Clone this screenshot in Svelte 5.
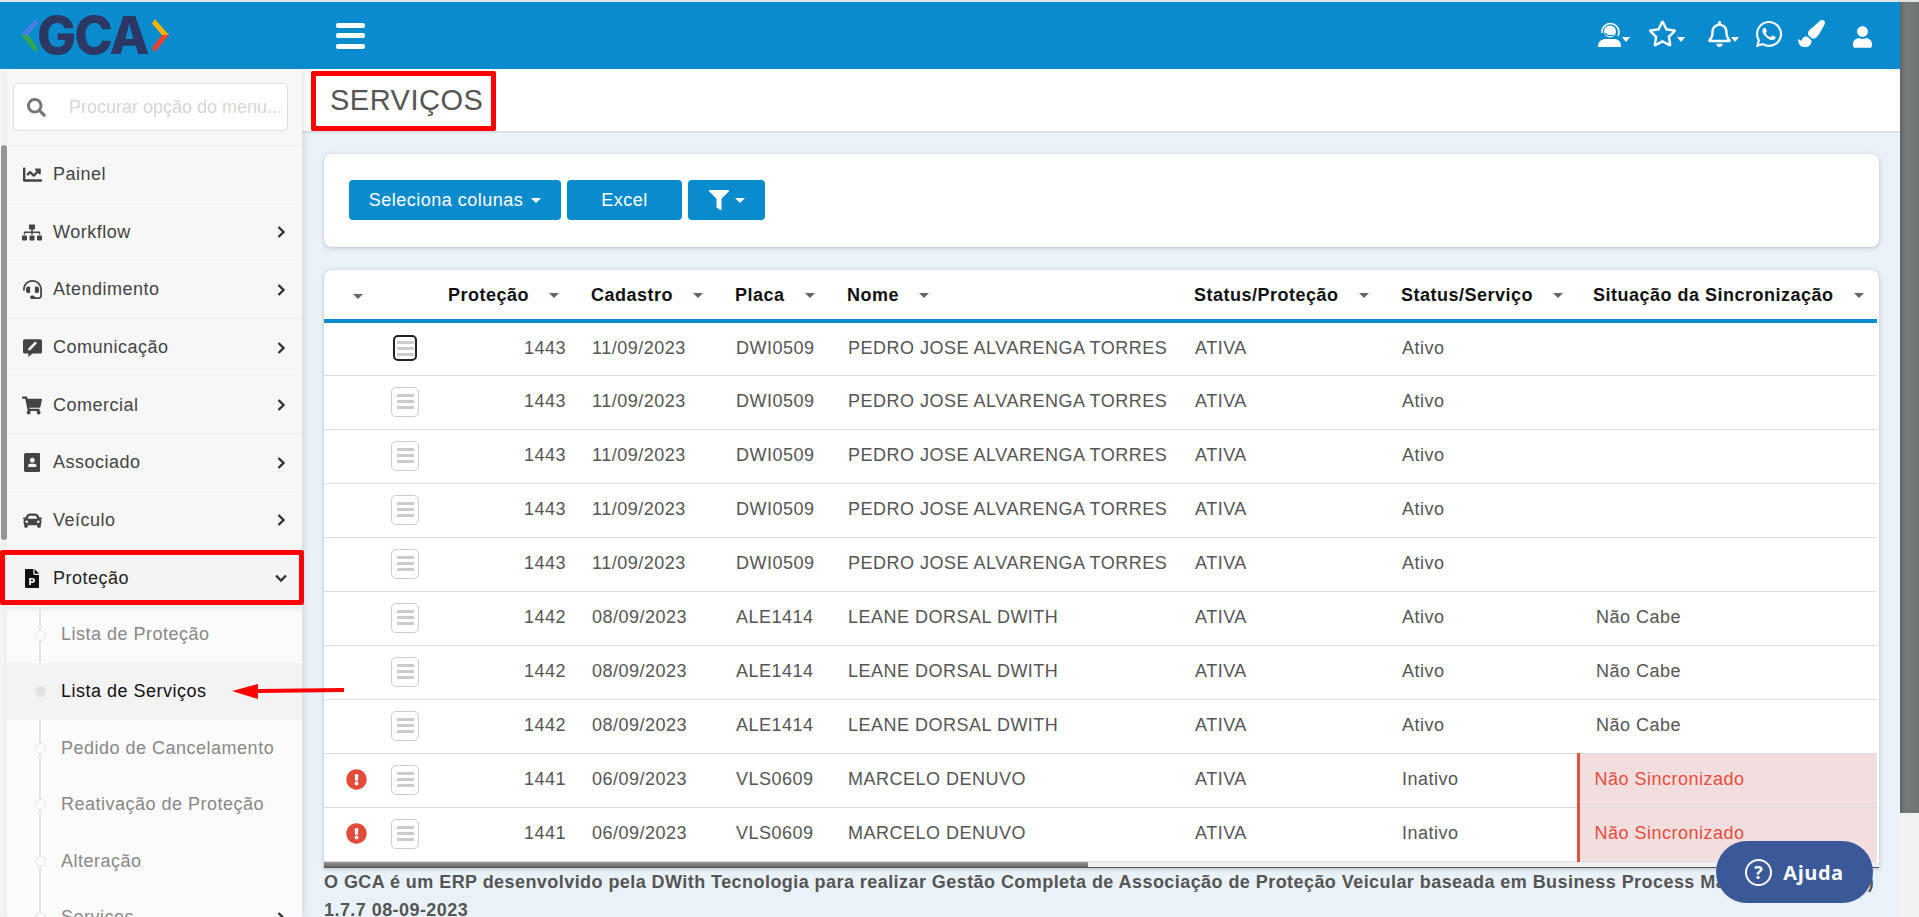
<script>
  const icons = {
    chart: { vb: "0 0 512 512", d: "M496 384H64V80c0-8.84-7.16-16-16-16H16C7.16 64 0 71.16 0 80v336c0 17.67 14.33 32 32 32h464c8.84 0 16-7.16 16-16v-32c0-8.84-7.16-16-16-16zM464 96H345.94c-21.38 0-32.09 25.85-16.97 40.97l32.4 32.4L288 242.75l-73.37-73.37c-12.5-12.5-32.76-12.5-45.25 0l-68.69 68.69c-6.25 6.25-6.25 16.38 0 22.63l22.62 22.62c6.25 6.25 16.38 6.25 22.63 0L192 237.25l73.37 73.37c12.5 12.5 32.76 12.5 45.25 0l96-96 32.4 32.4c15.12 15.12 40.97 4.41 40.97-16.97V112c.01-8.84-7.15-16-15.99-16z" },
    sitemap: { vb: "0 0 640 512", d: "M128 352H32c-17.67 0-32 14.33-32 32v96c0 17.67 14.33 32 32 32h96c17.67 0 32-14.33 32-32v-96c0-17.67-14.33-32-32-32zm-24-80h192v48h48v-48h192v48h48v-57.59c0-21.17-17.23-38.41-38.41-38.41H344v-64h40c17.67 0 32-14.33 32-32V32c0-17.67-14.33-32-32-32H256c-17.67 0-32 14.33-32 32v96c0 17.67 14.33 32 32 32h40v64H94.41C73.23 224 56 241.23 56 262.41V320h48v-48zm264 80h-96c-17.67 0-32 14.33-32 32v96c0 17.67 14.33 32 32 32h96c17.67 0 32-14.33 32-32v-96c0-17.67-14.33-32-32-32zm240 0h-96c-17.67 0-32 14.33-32 32v96c0 17.67 14.33 32 32 32h96c17.67 0 32-14.33 32-32v-96c0-17.67-14.33-32-32-32z" },
    headset: { vb: "0 0 512 512", d: "M192 208c0-17.67-14.33-32-32-32h-16c-35.35 0-64 28.65-64 64v48c0 35.35 28.65 64 64 64h16c17.67 0 32-14.33 32-32V208zm176 144c35.35 0 64-28.65 64-64v-48c0-35.35-28.65-64-64-64h-16c-17.67 0-32 14.33-32 32v112c0 17.67 14.33 32 32 32h16zM256 0C113.18 0 4.58 118.83 0 256v16c0 8.84 7.16 16 16 16h16c8.84 0 16-7.16 16-16v-16c0-114.69 93.31-208 208-208s208 93.31 208 208h-.12c.08 2.43.12 165.72.12 165.72 0 23.35-18.93 42.28-42.28 42.28H320c0-26.51-21.49-48-48-48h-32c-26.51 0-48 21.49-48 48s21.49 48 48 48h181.72c49.86 0 90.28-40.42 90.28-90.28V256C507.42 118.83 398.82 0 256 0z" },
    comment: { vb: "0 0 512 512", d: "M48 32h416c26.5 0 48 21.5 48 48v288c0 26.5-21.500 48-48 48H256l-112 96v-96H48c-26.5 0-48-21.500-48-48V80c0-26.500 21.500-48 48-48zm280 64l-176 176-16 64 64-16 176-176z" },
    cart: { vb: "0 0 576 512", d: "M528.12 301.319l47.273-208C578.806 78.301 567.391 64 551.99 64H159.208l-9.166-44.81C147.758 8.021 137.93 0 126.529 0H24C10.745 0 0 10.745 0 24v16c0 13.255 10.745 24 24 24h69.883l70.248 343.435C147.325 417.1 136 435.222 136 456c0 30.928 25.072 56 56 56s56-25.072 56-56c0-15.674-6.447-29.835-16.824-40h209.647C430.447 426.165 424 440.326 424 456c0 30.928 25.072 56 56 56s56-25.072 56-56c0-22.172-12.888-41.332-31.579-50.405l5.517-24.276c3.413-15.018-8.002-29.319-23.403-29.319H218.117l-6.545-32h293.145c11.206 0 20.92-7.754 23.403-18.681z" },
    contact: { vb: "0 0 448 512", d: "M48 0h352c26.500 0 48 21.500 48 48v416c0 26.500-21.500 48-48 48H48c-26.500 0-48-21.500-48-48V48C0 21.500 21.500 0 48 0zm176 128c-35.300 0-64 28.700-64 64s28.700 64 64 64 64-28.700 64-64-28.700-64-64-64zm-48 160c-35.300 0-64 21.500-64 48v24c0 8.800 7.200 16 16 16h192c8.800 0 16-7.200 16-16v-24c0-26.500-28.700-48-64-48z" },
    car: { vb: "0 0 512 512", d: "M499.99 176h-59.87l-16.64-41.6C406.38 91.63 365.57 64 319.5 64h-127c-46.06 0-86.88 27.63-103.99 70.4L71.87 176H12.01C4.2 176-1.53 183.34.37 190.91l6 24C7.7 220.25 12.5 224 18.01 224h20.07C24.65 235.73 16 252.78 16 272v48c0 16.12 6.16 30.67 16 41.93V416c0 17.67 14.33 32 32 32h32c17.67 0 32-14.33 32-32v-32h256v32c0 17.67 14.33 32 32 32h32c17.67 0 32-14.33 32-32v-54.07c9.84-11.25 16-25.8 16-41.93v-48c0-19.22-8.65-36.27-22.07-48H494c5.51 0 10.31-3.75 11.64-9.09l6-24c1.89-7.57-3.84-14.91-11.65-14.91zm-352.06-17.83c7.29-18.22 24.94-30.17 44.57-30.17h127c19.63 0 37.28 11.95 44.57 30.17L384 208H128l19.93-49.83zM96 319.8c-19.2 0-32-12.76-32-31.9S76.8 256 96 256s48 28.71 48 47.85-28.8 15.95-48 15.95zm320 0c-19.2 0-48 3.19-48-15.95S396.8 256 416 256s32 12.76 32 31.9-12.8 31.9-32 31.9z" },
    filep: { vb: "0 0 384 512", d: "M32 0h192v128c0 17.700 14.300 32 32 32h128v320c0 17.700-14.300 32-32 32H32c-17.700 0-32-14.300-32-32V32C0 14.300 14.300 0 32 0zm224 0l128 128H256zM112 240v192h48v-56h40c39.800 0 72-30 72-68s-32.200-68-72-68zm48 44h36c13 0 24 10.500 24 24s-11 24-24 24h-36z" }
  };

  const menu = [
    { label: "Painel", icon: "chart" },
    { label: "Workflow", icon: "sitemap", more: true },
    { label: "Atendimento", icon: "headset", more: true },
    { label: "Comunicação", icon: "comment", more: true },
    { label: "Comercial", icon: "cart", more: true },
    { label: "Associado", icon: "contact", more: true },
    { label: "Veículo", icon: "car", more: true }
  ];

  const submenu = [
    { label: "Lista de Proteção" },
    { label: "Lista de Serviços", active: true },
    { label: "Pedido de Cancelamento" },
    { label: "Reativação de Proteção" },
    { label: "Alteração" },
    { label: "Serviços", more: true }
  ];

  const columns = ["Proteção", "Cadastro", "Placa", "Nome", "Status/Proteção", "Status/Serviço", "Situação da Sincronização"];

  const pedro = { id: 1443, date: "11/09/2023", plate: "DWI0509", name: "PEDRO JOSE ALVARENGA TORRES", status: "Ativo", sync: "" };
  const leane = { id: 1442, date: "08/09/2023", plate: "ALE1414", name: "LEANE DORSAL DWITH", status: "Ativo", sync: "Não Cabe" };
  const marcelo = { id: 1441, date: "06/09/2023", plate: "VLS0609", name: "MARCELO DENUVO", status: "Inativo", sync: "Não Sincronizado", alert: true };
  const rows = [pedro, pedro, pedro, pedro, pedro, leane, leane, leane, marcelo, marcelo];
</script>

{#snippet chevron(down)}
  <svg class="chev" class:down viewBox="0 0 10 14"><path d="M2.500 2l5 5-5 5" /></svg>
{/snippet}

<div class="page">
  <div class="window">
    <header class="topbar">
      <div class="brand">
        <svg class="chevrons" viewBox="0 0 20 38">
          <path d="M17 0L1 18h8L20 5z" fill="#4a7fe4" />
          <path d="M1 18l16 19 3-5-11-14z" fill="#2fa84f" />
        </svg>
        <span class="logo">GCA</span>
        <svg class="chevrons" viewBox="0 0 20 38">
          <path d="M3 0l16 18h-8L0 5z" fill="#f4b400" />
          <path d="M19 18L3 37l-3-5 11-14z" fill="#e8452c" />
        </svg>
      </div>
      <button class="burger" aria-label="menu"><i></i><i></i><i></i></button>
      <nav class="tools">
        <svg class="agent" viewBox="0 0 24 26" fill="none" stroke="#fff">
          <path d="M4 12a8.500 8.500 0 1 1 16 3" stroke-width="1.500" />
          <circle cx="12" cy="10.500" r="6" fill="#fff" stroke="none" />
          <path d="M7 12c2 3 6 3 9 2" stroke="#0a8bcd" stroke-width="1.300" />
          <path d="M0 26c0-6 4-8 8-8h8c4 0 7 2 7 8z" fill="#fff" stroke="none" />
        </svg>
        <span class="tcaret"></span>
        <svg class="star" viewBox="0 0 576 512"><path fill="#fff" d="M528.1 171.5L382 150.2 316.7 17.8c-11.700-23.600-45.600-23.900-57.400 0L194 150.200 47.900 171.500c-26.200 3.800-36.700 36.100-17.700 54.600l105.700 103-25 145.500c-4.500 26.300 23.200 46 46.400 33.700L288 439.600l130.700 68.700c23.200 12.200 50.900-7.400 46.400-33.700l-25-145.500 105.700-103c19-18.500 8.500-50.800-17.700-54.600zM388.600 312.300l23.700 138.400L288 385.400l-124.300 65.300 23.700-138.400-100.600-98 139-20.200 62.200-126 62.200 126 139 20.200-100.600 98z" /></svg>
        <span class="tcaret"></span>
        <svg class="bell" viewBox="0 0 448 512"><path fill="#fff" d="M439.390 362.290c-19.320-20.760-55.470-51.990-55.470-154.290 0-77.700-54.480-139.900-127.940-155.160V32c0-17.670-14.320-32-31.980-32s-31.980 14.330-31.980 32v20.840C118.560 68.100 64.080 130.300 64.080 208c0 102.300-36.150 133.530-55.470 154.290-6 6.450-8.660 14.160-8.610 21.710.110 16.400 12.980 32 32.100 32h383.800c19.120 0 32-15.600 32.100-32 .050-7.550-2.610-15.270-8.610-21.710zM67.530 368c21.220-27.970 44.420-74.330 44.530-159.420 0-.200-.060-.380-.060-.580 0-61.860 50.140-112 112-112s112 50.140 112 112c0 .200-.060.380-.060.580.110 85.100 23.310 131.460 44.530 159.420H67.530zM224 512c35.320 0 63.970-28.650 63.970-64H160.030c0 35.350 28.650 64 63.970 64z" /></svg>
        <span class="tcaret"></span>
        <svg class="whats" viewBox="0 0 448 512"><path fill="#fff" d="M380.900 97.100C339 55.100 283.200 32 223.900 32c-122.400 0-222 99.600-222 222 0 39.100 10.200 77.300 29.600 111L0 480l117.700-30.900c32.400 17.700 68.900 27 106.100 27h.100c122.300 0 224.100-99.600 224.100-222 0-59.300-25.200-115-67.100-157zm-157 341.600c-33.200 0-65.700-8.900-94-25.700l-6.700-4-69.800 18.300L72 359.200l-4.400-7c-18.500-29.400-28.200-63.300-28.200-98.200 0-101.700 82.800-184.500 184.600-184.500 49.300 0 95.600 19.200 130.400 54.100 34.800 34.900 56.200 81.200 56.100 130.500 0 101.800-84.900 184.600-186.600 184.600zm101.200-138.200c-5.500-2.800-32.800-16.200-37.900-18-5.100-1.900-8.800-2.800-12.500 2.800-3.700 5.600-14.300 18-17.600 21.800-3.200 3.700-6.500 4.200-12 1.400-32.600-16.300-54-29.100-75.500-66-5.700-9.800 5.700-9.100 16.300-30.300 1.800-3.700.9-6.900-.5-9.700-1.400-2.800-12.500-30.100-17.100-41.200-4.500-10.800-9.100-9.300-12.500-9.500-3.200-.2-6.900-.2-10.600-.2-3.700 0-9.700 1.400-14.800 6.900-5.100 5.600-19.400 19-19.400 46.300 0 27.300 19.900 53.700 22.600 57.400 2.800 3.700 39.100 59.700 94.800 83.800 35.200 15.200 49 16.500 66.600 13.900 10.700-1.600 32.800-13.400 37.400-26.400 4.600-13 4.600-24.100 3.200-26.400-1.300-2.500-5-3.900-10.500-6.600z" /></svg>
        <svg class="brush" viewBox="0 0 512 512"><path fill="#fff" d="M167.020 309.340c-40.120 2.580-76.530 17.860-97.190 72.300-2.350 6.210-8 9.980-14.590 9.980-11.110 0-45.460-27.670-55.250-34.350C0 439.620 37.930 512 128 512c75.860 0 128-43.770 128-120.190 0-3.110-.65-6.080-.97-9.130l-88.010-73.340zM457.890 0c-15.160 0-29.370 6.710-40.210 16.450C213.270 199.050 192 203.340 192 257.090c0 13.700 3.250 26.760 8.730 38.700l63.820 53.180c7.210 1.800 14.640 3.030 22.390 3.030 62.110 0 98.110-45.470 211.160-256.460 7.380-14.350 13.900-29.850 13.900-45.990C512 20.640 486 0 457.890 0z" /></svg>
        <svg class="user" viewBox="0 0 448 512"><path fill="#fff" d="M224 256c70.700 0 128-57.300 128-128S294.700 0 224 0 96 57.300 96 128s57.300 128 128 128zm89.600 32h-16.700c-22.200 10.200-46.900 16-72.900 16s-50.600-5.800-72.900-16h-16.700C60.200 288 0 348.200 0 422.400V464c0 26.500 21.500 48 48 48h352c26.500 0 48-21.500 48-48v-41.600c0-74.200-60.200-134.400-134.400-134.400z" /></svg>
      </nav>
    </header>

    <div class="body">
      <div class="railwrap"><div class="rail"></div></div>
      <aside class="sidebar">
        <div class="searchwrap">
          <label class="search">
            <svg viewBox="0 0 512 512"><path fill="#777" d="M505 442.700L405.300 343c-4.500-4.500-10.600-7-17-7H372c27.600-35.300 44-79.700 44-128C416 93.100 322.900 0 208 0S0 93.100 0 208s93.100 208 208 208c48.300 0 92.700-16.400 128-44v16.300c0 6.400 2.500 12.500 7 17l99.700 99.700c9.400 9.400 24.600 9.400 33.900 0l28.300-28.300c9.400-9.400 9.400-24.600.1-34zM208 336c-70.700 0-128-57.200-128-128 0-70.700 57.200-128 128-128 70.700 0 128 57.200 128 128 0 70.700-57.200 128-128 128z" /></svg>
            <span>Procurar opção do menu...</span>
          </label>
        </div>

        {#each menu as item}
          <div class="item">
            <span class="mi"><svg viewBox={icons[item.icon].vb}><path d={icons[item.icon].d} /></svg></span>
            <span class="lbl">{item.label}</span>
            {#if item.more}{@render chevron(false)}{/if}
          </div>
        {/each}

        <div class="item open">
          <span class="mi"><svg viewBox={icons.filep.vb}><path fill-rule="evenodd" d={icons.filep.d} /></svg></span>
          <span class="lbl">Proteção</span>
          {@render chevron(true)}
        </div>
        <div class="sub">
          {#each submenu as s}
            <div class="subitem" class:active={s.active}>
              <span class="dot"></span>
              <span class="lbl">{s.label}</span>
              {#if s.more}{@render chevron(false)}{/if}
            </div>
          {/each}
        </div>
      </aside>

      <main class="main">
        <div class="pagehead"><h1>SERVIÇOS</h1></div>
        <div class="content">
          <section class="card tools-card">
            <button class="btn sel">Seleciona colunas <span class="bcaret"></span></button>
            <button class="btn excel">Excel</button>
            <button class="btn filter" aria-label="filtro">
              <svg viewBox="0 0 512 512"><path fill="#fff" d="M487.976 0H24.028C2.710 0-8.047 25.866 7.058 40.971L192 225.941V432c0 7.831 3.821 15.170 10.237 19.662l80 55.980C298.020 518.690 320 507.493 320 487.980V225.941l184.947-184.970C520.021 25.896 509.338 0 487.976 0z" /></svg>
              <span class="bcaret"></span>
            </button>
          </section>

          <section class="card tablecard">
            <table>
              <colgroup>
                <col class="c0" /><col class="c1" /><col class="c2" /><col class="c3" /><col class="c4" /><col class="c5" /><col class="c6" /><col class="c7" /><col />
              </colgroup>
              <thead>
                <tr>
                  <th class="first"><span class="caret"></span></th>
                  <th></th>
                  {#each columns as c}
                    <th><span class="thin">{c}<span class="caret"></span></span></th>
                  {/each}
                </tr>
              </thead>
              <tbody>
                {#each rows as r, i}
                  <tr>
                    <td class="alertcell">
                      {#if r.alert}
                        <svg viewBox="0 0 512 512"><path fill="#e04b3a" d="M504 256c0 136.997-111.043 248-248 248S8 392.997 8 256C8 119.083 119.043 8 256 8s248 111.083 248 248zm-248 50c-25.405 0-46 20.595-46 46s20.595 46 46 46 46-20.595 46-46-20.595-46-46-46zm-43.673-165.346l7.418 136c.347 6.364 5.609 11.346 11.982 11.346h48.546c6.373 0 11.635-4.982 11.982-11.346l7.418-136c.375-6.874-5.098-12.654-11.982-12.654h-63.383c-6.884 0-12.356 5.780-11.981 12.654z" /></svg>
                      {/if}
                    </td>
                    <td class="btncell"><span class="rowbtn" class:focus={i === 0}><i></i><i></i><i></i></span></td>
                    <td class="num">{r.id}</td>
                    <td>{r.date}</td>
                    <td>{r.plate}</td>
                    <td>{r.name}</td>
                    <td>ATIVA</td>
                    <td>{r.status}</td>
                    <td class="sync" class:bad={r.alert}>{r.sync}</td>
                  </tr>
                {/each}
              </tbody>
            </table>
            <div class="hscroll"><div class="hthumb"></div></div>
          </section>

          <footer class="foot">
            <div>O GCA é um ERP desenvolvido pela DWith Tecnologia para realizar Gestão Completa de Associação de Proteção Veicular baseada em Business Process Management (BPM)</div>
            <div>1.7.7 08-09-2023</div>
          </footer>
        </div>
      </main>

      <div class="help"><span class="q">?</span>Ajuda</div>
      <div class="mark mark-title"></div>
      <div class="mark mark-menu"></div>
      <svg class="arrow" viewBox="0 0 112 16"><path d="M0 8l26-7v5l85-1a2 2 0 0 1 0 4l-85 1v6z" fill="#f00" /></svg>
    </div>
  </div>
  <div class="vscroll"><div class="vthumb"></div></div>
</div>

<style>
  :global(body) {
    margin: 0;
    overflow: hidden;
    font-family: "Liberation Sans", Arial, sans-serif;
    font-size: 18px;
    letter-spacing: 0.5px;
    color: #555;
  }
  .page {
    display: flex;
    height: 917px;
    border-top: 2px solid #dfe3e5;
    box-sizing: border-box;
  }
  .window {
    flex: 1;
    min-width: 0;
    display: flex;
    flex-direction: column;
  }
  .vscroll {
    width: 19px;
    background: #f1f1f1;
  }
  .vthumb {
    height: 811px;
    background: linear-gradient(90deg, #606364, #777b7c 30%, #6f7374);
  }

  .topbar {
    height: 67px;
    background: #0a8bcd;
    display: flex;
    align-items: center;
    flex: none;
  }
  .brand {
    width: 336px;
    padding-left: 20px;
    box-sizing: border-box;
    display: flex;
    align-items: center;
  }
  .chevrons {
    width: 18px;
    height: 38px;
    flex: none;
  }
  .logo {
    font-family: Inter, "Liberation Sans", sans-serif;
    font-weight: 800;
    font-size: 52px;
    line-height: 1;
    letter-spacing: -1.800px;
    color: #2c3763;
    width: 115px;
    margin-left: -1px;
  }
  .burger {
    width: 29px;
    height: 26px;
    padding: 0;
    border: 0;
    background: none;
    display: flex;
    flex-direction: column;
    justify-content: space-between;
  }
  .burger i {
    display: block;
    height: 5px;
    border-radius: 2px;
    background: #fff;
  }
  .tools {
    margin-left: auto;
    display: flex;
    align-items: center;
    padding-right: 28px;
    padding-bottom: 4px;
  }
  .tools svg {
    display: block;
    flex: none;
  }
  .agent { width: 24px; height: 26px; margin-left: -2px; }
  .star { width: 29px; height: 27px; margin-left: 18px; }
  .bell { width: 23px; height: 26px; margin-left: 23px; }
  .whats { width: 28px; height: 30px; margin-left: 16px; }
  .brush { width: 27px; height: 27px; margin-left: 15px; }
  .user { width: 19px; height: 22px; margin-left: 28px; margin-top: 6px; }
  .tcaret {
    width: 0;
    height: 0;
    border: 4px solid transparent;
    border-top: 5px solid #fff;
    border-bottom: 0;
    margin-top: 12px;
  }

  .body {
    flex: 1;
    min-height: 0;
    display: flex;
    position: relative;
    background: #eaf2f9;
  }
  .railwrap {
    width: 7px;
    flex: none;
    background: #f3f3f3;
    padding-top: 76px;
    box-sizing: border-box;
  }
  .rail {
    width: 6px;
    margin-left: 1px;
    height: 395px;
    border-radius: 3px;
    background: #969696;
  }
  .sidebar {
    width: 295px;
    flex: none;
    background: #f7f7f7;
    box-shadow: 2px 0 6px rgba(90, 110, 130, 0.18);
    overflow: hidden;
    position: relative;
  }
  .searchwrap {
    padding: 14px 14px 14px 6px;
    border-bottom: 1px solid #f1f1f1;
  }
  .search {
    display: flex;
    align-items: center;
    height: 48px;
    box-sizing: border-box;
    background: #fff;
    border: 1px solid #ddd;
    border-radius: 4px;
    padding-left: 13px;
    color: #d6d6d6;
    font-size: 18px;
    letter-spacing: 0;
    white-space: nowrap;
    overflow: hidden;
  }
  .search svg {
    width: 19px;
    height: 19px;
    margin-right: 23px;
    flex: none;
  }
  .item {
    height: 57.600px;
    box-sizing: border-box;
    display: flex;
    align-items: center;
    padding-top: 1px;
    border-bottom: 1px solid #f2f2f2;
    color: #444;
    font-size: 18px;
  }
  .item .mi {
    width: 20px;
    margin-left: 15px;
    margin-right: 11px;
    display: flex;
    justify-content: center;
    flex: none;
  }
  .mi svg {
    max-width: 20px;
    height: 19px;
    fill: #444;
    display: block;
  }
  .item.open {
    color: #222;
    background: #f4f4f4;
    border: 0;
  }
  .item.open .mi svg {
    fill: #111;
  }
  .chev {
    width: 10px;
    height: 14px;
    margin-left: auto;
    margin-right: 16px;
    fill: none;
    stroke: #333;
    stroke-width: 2.400;
    flex: none;
  }
  .chev.down {
    transform: rotate(90deg);
  }
  .sub {
    background: #fbfbfb;
    position: relative;
    box-shadow: inset 0 6px 6px -6px rgba(0, 0, 0, 0.15);
  }
  .sub::before {
    content: "";
    position: absolute;
    left: 32px;
    top: 0;
    bottom: 0;
    width: 2px;
    background: #e4e4e4;
  }
  .subitem {
    height: 56.500px;
    display: flex;
    align-items: center;
    position: relative;
    color: #888;
    font-size: 18px;
    padding-left: 28px;
  }
  .subitem:first-child .lbl {
    margin-top: -2px;
  }
  .subitem.active {
    background: #f3f3f3;
    color: #111;
  }
  .dot {
    width: 9px;
    height: 9px;
    border: 1px solid #e4e4e4;
    border-radius: 50%;
    background: #fbfbfb;
    margin-right: 15px;
    position: relative;
    flex: none;
  }
  .subitem.active .dot {
    background: #e2e2e2;
  }

  .main {
    flex: 1;
    min-width: 0;
    display: flex;
    flex-direction: column;
  }
  .pagehead {
    height: 64px;
    flex: none;
    background: #fff;
    border-bottom: 2px solid #d9dfe5;
    box-sizing: border-box;
    display: flex;
    align-items: center;
    padding-left: 28px;
  }
  h1 {
    margin: 0;
    font-size: 29px;
    font-weight: 400;
    color: #555;
  }
  .content {
    padding: 21px 21px 0 22px;
  }
  .card {
    background: #fff;
    border-radius: 8px;
    box-shadow: 0 1px 4px rgba(60, 70, 80, 0.3);
  }
  .tools-card {
    height: 93px;
    box-sizing: border-box;
    padding: 26px 25px;
    display: flex;
    gap: 6px;
    margin-bottom: 23px;
  }
  .btn {
    height: 40px;
    border: 0;
    border-radius: 4px;
    background: #0a8bcd;
    color: #fff;
    font: inherit;
    letter-spacing: inherit;
    padding: 0;
    display: flex;
    align-items: center;
    justify-content: center;
  }
  .sel { width: 212px; gap: 8px; }
  .excel { width: 115px; }
  .filter { width: 77px; gap: 6px; }
  .filter svg { width: 20px; height: 20px; }
  .bcaret {
    width: 0;
    height: 0;
    border: 5px solid transparent;
    border-top: 5px solid #fff;
    border-bottom: 0;
  }

  .tablecard {
    overflow: hidden;
    padding-right: 2px;
    border-radius: 8px 8px 0 0;
  }
  table {
    width: 100%;
    table-layout: fixed;
    border-collapse: collapse;
  }
  .c0 { width: 54px; }
  .c1 { width: 57px; }
  .c2 { width: 144px; }
  .c3 { width: 144px; }
  .c4 { width: 112px; }
  .c5 { width: 347px; }
  .c6 { width: 207px; }
  .c7 { width: 189px; }
  th {
    height: 51px;
    padding: 2px 0 0 12px;
    text-align: left;
    color: #111;
    font-weight: 700;
    border-bottom: 4px solid #0a8bcd;
    white-space: nowrap;
    box-sizing: border-box;
  }
  th:nth-child(3) {
    padding-left: 13px;
  }
  th:last-child {
    padding-left: 15px;
  }
  th.first {
    padding-left: 29px;
  }
  .thin {
    display: inline-flex;
    align-items: center;
  }
  .caret {
    display: inline-block;
    width: 0;
    height: 0;
    border: 5px solid transparent;
    border-top: 5px solid #666;
    border-bottom: 0;
    margin-left: 20px;
  }
  th.first .caret {
    margin: 0 0 2px;
  }
  td {
    height: 54px;
    padding: 0 0 1px 13px;
    box-sizing: border-box;
    border-bottom: 1px solid #ddd;
    white-space: nowrap;
    color: #555;
  }
  td.num {
    text-align: right;
    padding-right: 13px;
  }
  td.alertcell {
    padding: 0 0 1px 22px;
  }
  .alertcell svg {
    display: block;
    width: 21px;
    height: 21px;
  }
  td.btncell {
    padding: 0 0 1px 13px;
  }
  .rowbtn {
    width: 28px;
    height: 30px;
    box-sizing: border-box;
    border: 1px solid #ccc;
    border-radius: 5px;
    display: flex;
    flex-direction: column;
    justify-content: center;
    align-items: center;
    gap: 3px;
  }
  .rowbtn i {
    display: block;
    width: 17px;
    height: 3px;
    background: #ccc;
  }
  .rowbtn.focus {
    width: 24px;
    height: 26px;
    margin: 0 0 0 2px;
    border: 2px solid #222;
  }
  td.sync {
    padding-left: 18px;
  }
  td.bad {
    background: #f2dede;
    color: #e74c3c;
    border-left: 3px solid #e0533d;
    padding-left: 15px;
  }
  .hscroll {
    height: 5px;
    background: #f0f0f0;
    margin-right: -2px;
    border-bottom: 1px solid #555;
  }
  .hthumb {
    width: 764px;
    height: 5px;
    background: linear-gradient(#9a9a9a, #666);
  }
  .foot {
    margin-top: 0;
    font-weight: 700;
    font-size: 18px;
    letter-spacing: 0.44px;
    line-height: 28px;
    white-space: nowrap;
    color: #555;
  }

  .help {
    position: absolute;
    left: 1716px;
    top: 772px;
    width: 157px;
    height: 62px;
    border-radius: 31px;
    background: #3b5998;
    color: #fff;
    font-family: "Open Sans", sans-serif;
    font-weight: 700;
    font-size: 20px;
    display: flex;
    align-items: center;
    justify-content: center;
    gap: 11px;
  }
  .q {
    width: 23px;
    height: 23px;
    border: 2.500px solid #fff;
    border-radius: 50%;
    display: flex;
    align-items: center;
    justify-content: center;
    font-size: 18px;
  }
  .mark {
    position: absolute;
    border: 5px solid #f00;
    border-radius: 2px;
    box-sizing: border-box;
    pointer-events: none;
  }
  .mark-title {
    left: 311px;
    top: 2px;
    width: 185px;
    height: 60px;
  }
  .mark-menu {
    left: 0;
    top: 481px;
    width: 304px;
    height: 55px;
  }
  .arrow {
    position: absolute;
    left: 232px;
    top: 614px;
    width: 112px;
    height: 16px;
  }
</style>
